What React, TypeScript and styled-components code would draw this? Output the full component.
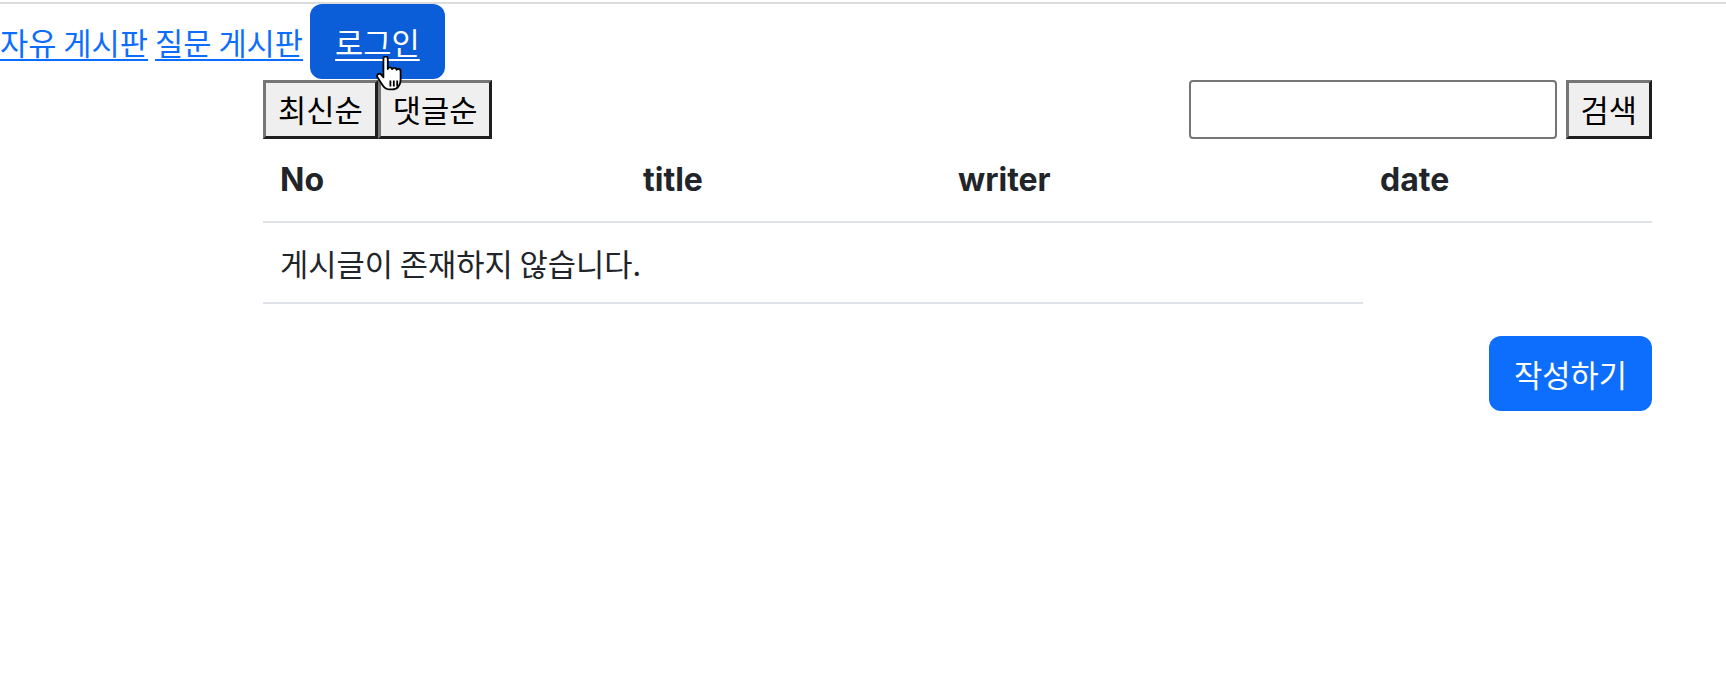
import React from 'react';
import styled, { createGlobalStyle } from 'styled-components';

const KR = `"Noto Sans CJK KR", "Noto Sans", sans-serif`;
const LATIN = `Inter, "Noto Sans CJK KR", sans-serif`;
const KR_SIZE = '30.7px';

const GlobalStyle = createGlobalStyle`
  html, body {
    margin: 0;
    padding: 0;
    background: #fff;
  }
  body {
    padding-top: 2px;
    font-family: ${KR};
    color: #212529;
  }
`;

const TopRule = styled.div`
  height: 2px;
  background: #dcdcdc;
`;

const Nav = styled.nav`
  position: relative;
  display: flex;
  align-items: baseline;
  gap: 7px;
  font-family: ${KR};
  font-size: ${KR_SIZE};
`;

const NavLink = styled.a`
  color: #0d6efd;
  text-decoration: underline;
  text-underline-offset: 4px;
  text-decoration-thickness: 2px;
  cursor: pointer;
`;

const PrimaryButton = styled.a<{ $hover?: boolean }>`
  display: inline-flex;
  align-items: center;
  justify-content: center;
  box-sizing: border-box;
  height: 75px;
  padding: 0 25px;
  border-radius: 12px;
  background: ${(p) => (p.$hover ? '#0b5ed7' : '#0d6efd')};
  color: #fff;
  font-family: ${KR};
  font-size: ${KR_SIZE};
  text-decoration: ${(p) => (p.$hover ? 'underline' : 'none')};
  text-underline-offset: 4px;
  text-decoration-thickness: 2px;
  cursor: pointer;
`;

const Cursor = styled.svg`
  position: absolute;
  left: 373px;
  top: 52px;
  width: 34px;
  height: 36px;
  pointer-events: none;
`;

const Board = styled.main`
  margin-left: 263px;
  width: 1389px;
  display: flex;
  flex-direction: column;
`;

const Toolbar = styled.div`
  display: flex;
  align-items: center;
  justify-content: space-between;
  padding-top: 1px;
`;

const Group = styled.div<{ $gap: number }>`
  display: flex;
  align-items: center;
  gap: ${(p) => p.$gap}px;
`;

const PlainButton = styled.button`
  box-sizing: border-box;
  height: 59px;
  padding: 0 12px;
  border-style: solid;
  border-width: 3px;
  border-color: #767676 #1f1f1f #1f1f1f #767676;
  background: #efefef;
  color: #000;
  font-family: ${KR};
  font-size: ${KR_SIZE};
  line-height: 1;
`;

const SearchInput = styled.input`
  box-sizing: border-box;
  width: 368px;
  height: 59px;
  border: 2px solid #767676;
  border-radius: 4px;
  padding: 0 8px;
  font-family: ${KR};
  font-size: 28px;
`;

const Table = styled.table`
  width: 100%;
  border-collapse: collapse;
  table-layout: fixed;
`;

const Th = styled.th`
  padding: 16px 17px;
  line-height: 50px;
  font-family: ${LATIN};
  font-size: 32px;
  font-weight: 700;
  text-align: left;
  color: #212529;
  border-bottom: 2px solid #dee2e6;
`;

const Td = styled.td`
  padding: 16px 17px;
  line-height: 47px;
  font-family: ${KR};
  font-size: ${KR_SIZE};
  color: #212529;
  border-bottom: 2px solid #dee2e6;
`;

const Footer = styled.div`
  display: flex;
  justify-content: flex-end;
  margin-top: 32px;
`;

const columns = [
  { key: 'no', label: 'No', width: 363 },
  { key: 'title', label: 'title', width: 315 },
  { key: 'writer', label: 'writer', width: 422 },
  { key: 'date', label: 'date', width: 289 },
];

function HandCursor() {
  return (
    <Cursor viewBox="0 0 17 18">
      <path
        d="M5.2 1.4c0-.7.5-1.2 1.1-1.2s1.1.5 1.1 1.2v5.1c.2-.5.6-.8 1.1-.8.6 0 1 .4 1.1.9.2-.4.6-.7 1.1-.7.6 0 1 .4 1.1 1 .2-.3.5-.5.9-.5.6 0 1.1.5 1.1 1.2v4.4c0 2.5-1.6 4.7-4.2 4.7H8.4c-1.6 0-2.6-.7-3.5-2L2.3 10.8c-.4-.6-.3-1.3.2-1.7.5-.4 1.3-.3 1.7.3l1 1.2V1.4z"
        fill="#fff"
        stroke="#000"
        strokeWidth="0.9"
        strokeLinejoin="round"
      />
      <path d="M8.7 12.2v3M10.4 12.2v3M12.1 12.2v3" stroke="#000" strokeWidth="0.9" />
    </Cursor>
  );
}

export default function App() {
  return (
    <>
      <GlobalStyle />
      <TopRule />
      <Nav>
        <NavLink>자유 게시판</NavLink>
        <NavLink>질문 게시판</NavLink>
        <PrimaryButton $hover>로그인</PrimaryButton>
        <HandCursor />
      </Nav>
      <Board>
        <Toolbar>
          <Group $gap={0}>
            <PlainButton>최신순</PlainButton>
            <PlainButton>댓글순</PlainButton>
          </Group>
          <Group $gap={9}>
            <SearchInput type="text" />
            <PlainButton>검색</PlainButton>
          </Group>
        </Toolbar>
        <Table>
          <colgroup>
            {columns.map((c) => (
              <col key={c.key} style={{ width: c.width }} />
            ))}
          </colgroup>
          <thead>
            <tr>
              {columns.map((c) => (
                <Th key={c.key}>{c.label}</Th>
              ))}
            </tr>
          </thead>
          <tbody>
            <tr>
              <Td colSpan={3}>게시글이 존재하지 않습니다.</Td>
            </tr>
          </tbody>
        </Table>
        <Footer>
          <PrimaryButton>작성하기</PrimaryButton>
        </Footer>
      </Board>
    </>
  );
}
